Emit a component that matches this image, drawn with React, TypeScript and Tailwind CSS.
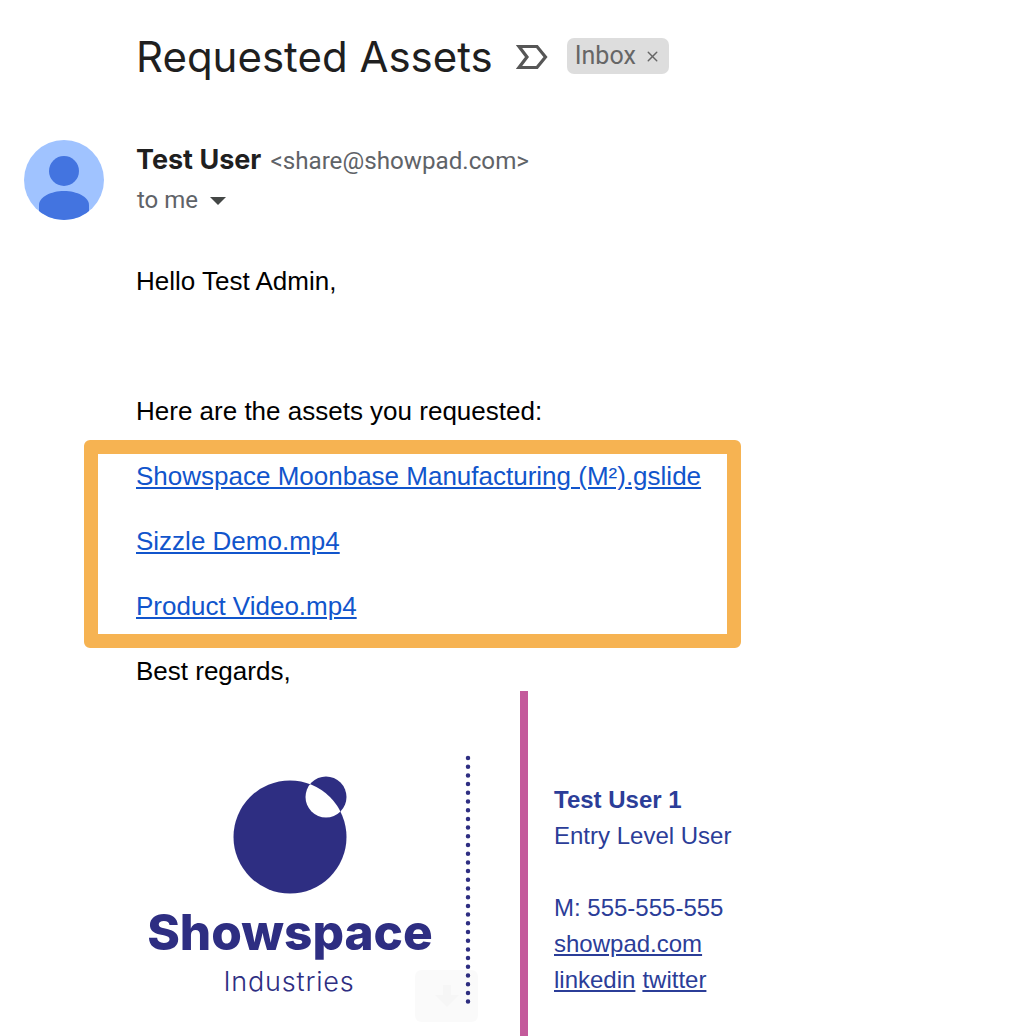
import { X } from 'lucide-react'

const sans = 'font-["Liberation_Sans",Arial,sans-serif]'

function ImportanceMarker() {
  return (
    <svg width="32" height="26" viewBox="0 0 32 26" fill="none" className="shrink-0">
      <path d="M3 2.5H21L29.5 13L21 23.5H3L11 13L3 2.5Z" stroke="#565656" strokeWidth="3.2" />
    </svg>
  )
}

function Avatar() {
  return (
    <svg width="80" height="80" viewBox="0 0 80 80" className="shrink-0">
      <defs>
        <clipPath id="avatar-clip">
          <circle cx="40" cy="40" r="40" />
        </clipPath>
      </defs>
      <circle cx="40" cy="40" r="40" fill="#a0c3ff" />
      <g clipPath="url(#avatar-clip)" fill="#4374e0">
        <circle cx="40" cy="31" r="15" />
        <path d="M15 80V65C15 57 27 51 40 51C53 51 65 57 65 65V80Z" />
      </g>
    </svg>
  )
}

function LogoMark() {
  return (
    <svg width="116" height="118" viewBox="0 0 116 118" className="shrink-0">
      <defs>
        <clipPath id="planet-clip">
          <circle cx="57" cy="61" r="56.5" />
        </clipPath>
      </defs>
      <circle cx="57" cy="61" r="56.5" fill="#2e2e82" />
      <circle cx="93" cy="21" r="20.5" fill="#2e2e82" />
      <circle cx="93" cy="21" r="20.5" fill="#ffffff" clipPath="url(#planet-clip)" />
    </svg>
  )
}

function DottedRule() {
  return (
    <svg width="6" height="258" viewBox="0 0 6 258" className="shrink-0">
      <line x1="3" y1="3" x2="3" y2="255" stroke="#2e2e82" strokeWidth="4.5" strokeLinecap="round" strokeDasharray="0 8.7" />
    </svg>
  )
}

export default function App() {
  return (
    <div className={`relative h-[1036px] w-[1022px] overflow-hidden bg-white ${sans}`}>
      <div className="flex items-center pl-[136px] pt-[30px]">
        <h1 className="font-['Inter',sans-serif] text-[42px] font-normal leading-[54px] text-[#1f1f1f]">Requested Assets</h1>
        <div className="ml-[23px]">
          <ImportanceMarker />
        </div>
        <span className="-mt-[2px] ml-[19px] flex h-[36px] w-[102px] items-center rounded-[7px] bg-[#dddddd] pl-[8px] font-['Roboto',sans-serif] text-[25px] text-[#666666]">
          Inbox
          <X size={17} strokeWidth={2} className="ml-[8px] text-[#666666]" />
        </span>
      </div>

      <div className="flex gap-[32px] pl-[24px] pt-[56px]">
        <Avatar />
        <div className="min-w-0 flex-1">
          <div className="flex items-baseline pt-[1px] leading-[38px]">
            <span className="font-['Inter',sans-serif] text-[27px] font-bold text-[#1f1f1f]">Test User</span>
            <span className="ml-[9px] font-['Roboto',sans-serif] text-[24.2px] text-[#5f6368]">&lt;share@showpad.com&gt;</span>
          </div>
          <div className="flex items-center pl-[1px] font-['Roboto',sans-serif] text-[24px] leading-[40px] text-[#5f6368]">
            to me
            <span className="ml-[12px] mt-[2px] h-0 w-0 border-x-[8px] border-t-[8px] border-x-transparent border-t-[#444746]" />
          </div>

          <p className="mt-[43px] text-[26px] leading-[36px] text-black">Hello Test Admin,</p>
          <p className="mt-[94px] text-[26px] leading-[36px] text-black">Here are the assets you requested:</p>

          <div className="-ml-[52px] mt-[11px] flex w-[657px] flex-col gap-[29px] rounded-[6px] border-[14px] border-[#f6b352] pb-[10px] pl-[38px] pt-[4px] text-[26px] leading-[36px] text-[#1155cc]">
            <a className="underline whitespace-nowrap">Showspace Moonbase Manufacturing (M²).gslide</a>
            <a className="underline">Sizzle Demo.mp4</a>
            <a className="underline">Product Video.mp4</a>
          </div>

          <p className="mt-[5px] text-[26px] leading-[36px] text-black">Best regards,</p>

          <div className="mt-[2px] flex">
            <div className="flex w-[384px] items-start pt-[64px]">
              <div className="flex w-[308px] flex-col items-center pl-[2px] pt-[21px] text-[#2e2e82]">
                <LogoMark />
                <span className="-ml-[2px] mt-[8px] font-['Inter',sans-serif] text-[49.5px] font-extrabold leading-[60px]">Showspace</span>
                <span className="-ml-[4px] mt-[2px] font-['Inter',sans-serif] text-[27px] font-light leading-[36px] tracking-[0.03em]">Industries</span>
              </div>
              <div className="ml-[21px]">
                <DottedRule />
              </div>
            </div>
            <div className="h-[345px] w-[8px] shrink-0 bg-[#c45a9b]" />
            <div className="pl-[26px] pt-[91px] text-[24px] leading-[36px] text-[#2b3d98]">
              <p className="font-bold">Test User 1</p>
              <p>Entry Level User</p>
              <p className="mt-[36px]">M: 555-555-555</p>
              <p><a className="underline">showpad.com</a></p>
              <p className="flex gap-[7px]">
                <a className="underline">linkedin</a>
                <a className="underline">twitter</a>
              </p>
            </div>
          </div>
        </div>
      </div>

      {/* faint download button over the logo image */}
      <div className="absolute left-[415px] top-[970px] flex h-[52px] w-[63px] items-center justify-center rounded-[6px] bg-black/[0.02]">
        <svg width="24" height="22" viewBox="0 0 24 22">
          <path d="M8 0H16V10H24L12 22L0 10H8Z" fill="#f6f6f6" />
        </svg>
      </div>
    </div>
  )
}
